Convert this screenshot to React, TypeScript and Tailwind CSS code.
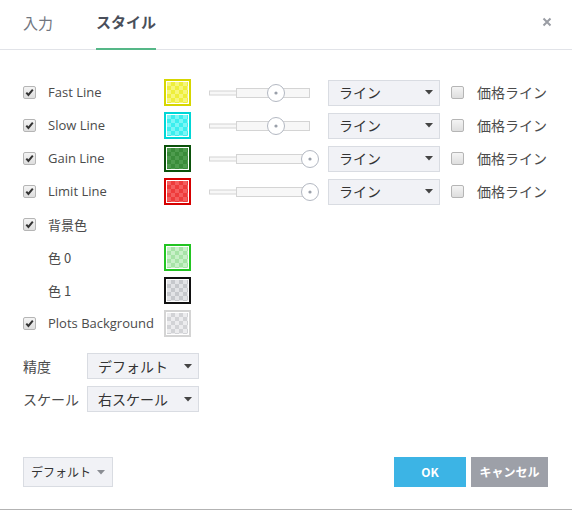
import React from 'react';

const latin = "font-['Open_Sans','Noto_Sans_CJK_JP',sans-serif]";
const jp = "font-['Noto_Sans_CJK_JP','Open_Sans',sans-serif]";

interface PlotRow {
  name: string;
  border: string;
  a: string;
  b: string;
  knob: number;
}

const plots: PlotRow[] = [
  { name: 'Fast Line', border: '#d6d600', a: '#eeee3c', b: '#f6f67a', knob: 67 },
  { name: 'Slow Line', border: '#00d6d6', a: '#3ceeee', b: '#7af6f6', knob: 67 },
  { name: 'Gain Line', border: '#0b520b', a: '#3a8c3a', b: '#4e9c4e', knob: 101 },
  { name: 'Limit Line', border: '#d60000', a: '#ee3c3c', b: '#f45e5e', knob: 101 },
];

const CheckBox = ({ checked }: { checked: boolean }) => (
  <span className="w-[13px] h-[13px] shrink-0 rounded-[2px] border border-[#b5b5b5] bg-gradient-to-b from-[#f4f4f4] to-[#dedede] flex items-center justify-center">
    {checked && (
      <svg width="9" height="9" viewBox="0 0 9 9">
        <path d="M1.3 4.6 L3.4 6.9 L7.8 1.6" stroke="#333" strokeWidth="2" fill="none" />
      </svg>
    )}
  </span>
);

const Swatch = ({ id, border, a, b }: { id: string; border: string; a: string; b: string }) => (
  <svg width="27" height="27" className="shrink-0">
    <defs>
      <pattern id={id} x="3" y="3" width="8" height="8" patternUnits="userSpaceOnUse">
        <rect width="8" height="8" fill={a} />
        <rect width="4" height="4" fill={b} />
        <rect x="4" y="4" width="4" height="4" fill={b} />
      </pattern>
    </defs>
    <rect x="1" y="1" width="25" height="25" fill="#fff" stroke={border} strokeWidth="2" />
    <rect x="3" y="3" width="21" height="21" fill={`url(#${id})`} />
  </svg>
);

const WidthSlider = ({ knob }: { knob: number }) => (
  <svg width="112" height="20" className="shrink-0">
    <rect x="0.5" y="8" width="27" height="4" fill="#f7f7f7" stroke="#d4d4d4" />
    <rect x="27.5" y="5.5" width="73" height="9" fill="#f7f7f7" stroke="#d4d4d4" />
    <circle cx={knob} cy="10" r="8.5" fill="#fff" stroke="#b3b8c2" />
    <circle cx={knob} cy="10" r="1.6" fill="#9aa0aa" />
  </svg>
);

const Caret = ({ color = '#444' }: { color?: string }) => (
  <svg width="8" height="5" viewBox="0 0 8 5">
    <path d="M0 0 H8 L4 4.5 Z" fill={color} />
  </svg>
);

const Select = ({ value }: { value: string }) => (
  <div className={`w-[112px] h-[26px] shrink-0 bg-[#f1f2f6] border border-[#d9dce2] flex items-center justify-between pl-[10px] pr-[6px] text-[14px] text-[#333] ${jp}`}>
    <span>{value}</span>
    <Caret />
  </div>
);

const App: React.FC = () => {
  return (
    <div className={`w-[572px] h-[510px] bg-white border-b border-[#b3b3b3] flex flex-col relative ${latin}`}>
      {/* tabs */}
      <div className="h-[50px] border-b border-[#e1e3e8] flex items-stretch pl-[23px] shrink-0">
        <div className={`flex items-center pb-[3px] text-[15px] text-[#71767f] ${jp}`}>入力</div>
        <div className={`ml-[43px] flex items-center pb-[3px] -mb-px border-b-2 border-[#55b787] text-[15px] font-bold text-[#4a4f5a] ${jp}`}>
          スタイル
        </div>
      </div>
      <button className="absolute left-[542px] top-[17px] w-[10px] h-[10px]">
        <svg width="10" height="10" viewBox="0 0 10 10">
          <path d="M1.5 1.5 L8.5 8.5 M8.5 1.5 L1.5 8.5" stroke="#9a9da4" strokeWidth="2" />
        </svg>
      </button>

      <div className="pl-[23px] pt-[26px] flex flex-col text-[13px] text-[#4b4b4b]">
        {plots.map((p, i) => (
          <div key={p.name} className="h-[33px] flex items-center">
            <CheckBox checked />
            <span className="ml-[12px] w-[116px]">{p.name}</span>
            <Swatch id={`sw${i}`} border={p.border} a={p.a} b={p.b} />
            <div className="ml-[18px]">
              <WidthSlider knob={p.knob} />
            </div>
            <div className="ml-[7px]">
              <Select value="ライン" />
            </div>
            <div className="ml-[11px]">
              <CheckBox checked={false} />
            </div>
            <span className={`ml-[13px] text-[14px] ${jp}`}>価格ライン</span>
          </div>
        ))}
        <div className="h-[33px] flex items-center">
          <CheckBox checked />
          <span className={`ml-[12px] ${jp}`}>背景色</span>
        </div>
        <div className="h-[33px] flex items-center">
          <span className={`ml-[25px] w-[116px] ${jp}`}>色 0</span>
          <Swatch id="bg0" border="#22c422" a="#a6e3a6" b="#c8f0c8" />
        </div>
        <div className="h-[33px] flex items-center">
          <span className={`ml-[25px] w-[116px] ${jp}`}>色 1</span>
          <Swatch id="bg1" border="#111" a="#c6c8cc" b="#e2e3e6" />
        </div>
        <div className="h-[33px] flex items-center">
          <CheckBox checked />
          <span className="ml-[12px] w-[116px]">Plots Background</span>
          <Swatch id="bg2" border="#d4d4d4" a="#d2d3d6" b="#ececee" />
        </div>

        <div className={`mt-[13px] flex flex-col gap-[7px] text-[14px] ${jp}`}>
          <div className="flex items-center">
            <span className="w-[64px]">精度</span>
            <Select value="デフォルト" />
          </div>
          <div className="flex items-center">
            <span className="w-[64px]">スケール</span>
            <Select value="右スケール" />
          </div>
        </div>
      </div>

      <div className="mt-[45px] px-[23px] flex items-center justify-between">
        <button className={`w-[90px] h-[30px] bg-[#f1f2f6] border border-[#d9dce2] flex items-center justify-center gap-[6px] text-[12px] text-[#333] ${jp}`}>
          <span>デフォルト</span>
          <Caret color="#8a8d93" />
        </button>
        <div className="flex gap-[5px] mr-[1px]">
          <button className={`w-[72px] h-[30px] bg-[#3cb4e5] text-white text-[12px] font-bold ${jp}`}>OK</button>
          <button className={`w-[77px] h-[30px] bg-[#9da0a8] text-white text-[12px] font-bold ${jp}`}>キャンセル</button>
        </div>
      </div>
    </div>
  );
};

export default App;
